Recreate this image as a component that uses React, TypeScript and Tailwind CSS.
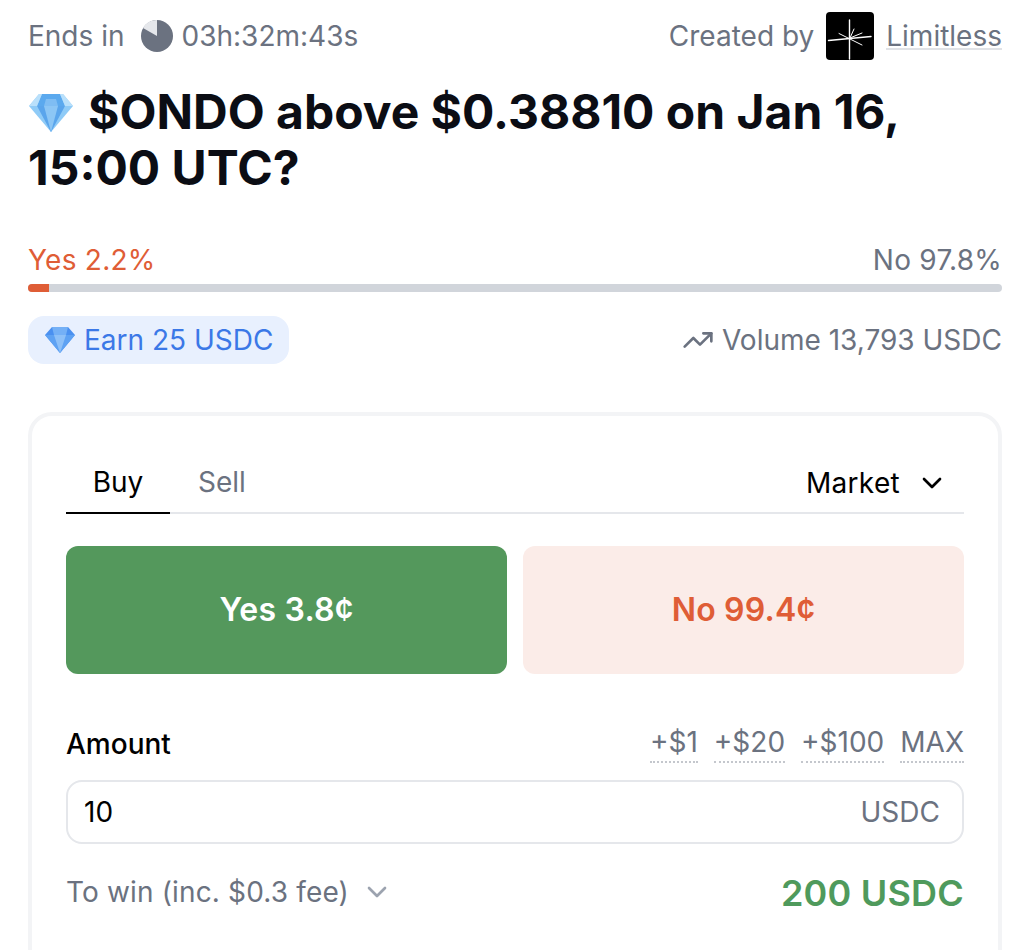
import React from 'react';
import { ChevronDown, TrendingUp } from 'lucide-react';

function Diamond({ className }: { className?: string }) {
  return (
    <svg viewBox="0 0 46 40" className={className}>
      <path d="M11 1h24l10 12-22 26L1 13z" fill="#8fcbf7" />
      <path d="M14 1h18l5 12H9z" fill="#5ba9ee" />
      <path d="M9 13h28L23 39z" fill="#5aa5ec" />
      <path d="M16 13h14l-7 26z" fill="#8cc6f5" />
      <path d="M1 13l10-12 3 0-5 12z" fill="#b9e0fb" />
      <path d="M35 1l10 12h-8L32 1z" fill="#b9e0fb" />
      <path d="M18 6h10l2 7H16z" fill="#7fbdf3" />
    </svg>
  );
}

function FlatDiamond({ className }: { className?: string }) {
  return (
    <svg viewBox="0 0 30 26" className={className}>
      <path d="M7 0h16l7 8-15 18L0 8z" fill="#4a90f0" />
      <path d="M0 8h30L15 26z" fill="#5ea2f3" />
      <path d="M9 8h12l-6 18z" fill="#8dc0f8" />
      <path d="M7 0h16l-2 8H9z" fill="#74b0f6" />
    </svg>
  );
}

function LimitlessLogo() {
  return (
    <div className="w-12 h-12 rounded-[4px] bg-black flex items-center justify-center">
      <svg viewBox="0 0 48 48" className="w-12 h-12" stroke="white" fill="none" strokeLinecap="round">
        <path d="M23.5 8v39" strokeWidth="1.4" />
        <path d="M2.5 28.5L45 24.5" strokeWidth="1.4" />
        <path d="M13 21.5L36 33" strokeWidth="1" />
        <path d="M24 26L28 17" strokeWidth="1" />
        <path d="M24 26L36 21" strokeWidth="1" />
      </svg>
    </div>
  );
}

function QuickAmount({ label }: { label: string }) {
  return (
    <span className="border-b-2 border-dotted border-[#c4c7cd] leading-[34px] h-[38px] text-[#6b7280]">
      {label}
    </span>
  );
}

export default function App() {
  return (
    <div className="h-[950px] overflow-hidden bg-white px-[28px] pt-[12px] font-['Inter',sans-serif] text-[28px]">
      {/* Header row */}
      <div className="flex items-center justify-between h-12 text-[#6b7280]">
        <div className="flex items-center">
          <span>Ends in</span>
          <svg viewBox="0 0 32 32" className="w-8 h-8 ml-4 mr-[9px]">
            <circle cx="16" cy="16" r="16" fill="#6b7280" />
            <path d="M16 16L16 0A16 16 0 0 0 2 8z" fill="#e5e7eb" />
          </svg>
          <span>03h:32m:43s</span>
        </div>
        <div className="flex items-center">
          <span>Created by</span>
          <div className="ml-3 mr-3">
            <LimitlessLogo />
          </div>
          <span className="mt-[2px] border-b-2 border-[#e0e2e6] leading-[24px]">Limitless</span>
        </div>
      </div>

      <h1 className="mt-[24px] text-[48px] leading-[56px] font-bold text-[#0b0d14]">
        <Diamond className="inline-block w-[46px] h-[40px] mr-[14px] align-[-4px]" />
        $ONDO above $0.38810 on Jan 16,
        <br />
        15:00 UTC?
      </h1>

      {/* Odds */}
      <div className="mt-[46px] flex justify-between leading-[36px] tracking-[0.25px]">
        <span className="text-[#df5d36]">Yes 2.2%</span>
        <span className="text-[#6b7280]">No 97.8%</span>
      </div>
      <div className="mt-[6px] h-2 rounded-full bg-[#d1d5db] overflow-hidden">
        <div className="h-2 w-[21px] bg-[#df5d36]" />
      </div>

      <div className="mt-[24px] flex items-center justify-between">
        <div className="h-12 w-[261px] rounded-2xl bg-[#e8f0fe] flex items-center pl-[17px] text-[#3b78e7]">
          <FlatDiamond className="w-[30px] h-[26px] mr-[9px]" />
          Earn 25 USDC
        </div>
        <div className="flex items-center text-[#6b7280]">
          <TrendingUp className="w-8 h-8 mr-[8px]" strokeWidth={2} />
          Volume 13,793 USDC
        </div>
      </div>

      {/* Trade card */}
      <div className="mt-[48px] border-4 border-[#f3f4f6] rounded-[24px] h-[700px] px-[34px] pt-[32px]">
        <div className="flex justify-between border-b-2 border-[#e5e7eb] h-[66px]">
          <div className="flex">
            <div className="w-[104px] h-[66px] border-b-2 border-black text-black text-center leading-[68px]">Buy</div>
            <div className="ml-[28px] text-[#6b7280] leading-[68px]">Sell</div>
          </div>
          <div className="flex items-center h-[70px] pr-4 text-black tracking-[0.3px]">
            Market
            <ChevronDown className="w-8 h-8 ml-4" strokeWidth={2} />
          </div>
        </div>

        <div className="mt-[32px] grid grid-cols-2 gap-4">
          <div className="h-[128px] rounded-xl bg-[#54985c] text-white font-semibold text-[32px] tracking-[0.2px] flex items-center justify-center">
            Yes 3.8¢
          </div>
          <div className="h-[128px] rounded-xl bg-[#fbece8] text-[#df5d36] font-semibold text-[32px] tracking-[0.2px] flex items-center justify-center">
            No 99.4¢
          </div>
        </div>

        <div className="mt-[50px] flex items-center justify-between h-[40px]">
          <span className="text-black font-medium">Amount</span>
          <div className="flex gap-4">
            <QuickAmount label="+$1" />
            <QuickAmount label="+$20" />
            <QuickAmount label="+$100" />
            <QuickAmount label="MAX" />
          </div>
        </div>

        <div className="mt-4 h-16 border-2 border-[#e5e7eb] rounded-2xl flex items-center justify-between pl-[16px] pr-[22px]">
          <span className="text-black">10</span>
          <span className="text-[#6b7280]">USDC</span>
        </div>

        <div className="mt-[24px] flex items-center justify-between h-[48px]">
          <div className="flex items-center text-[#6b7280] tracking-[0.15px]">
            To win (inc. $0.3 fee)
            <ChevronDown className="w-8 h-8 ml-3 text-[#9ca3af]" strokeWidth={2} />
          </div>
          <span className="mt-[2px] text-[#4f9a5c] font-semibold text-[36px] tracking-[0.2px]">200 USDC</span>
        </div>
      </div>
    </div>
  );
}
